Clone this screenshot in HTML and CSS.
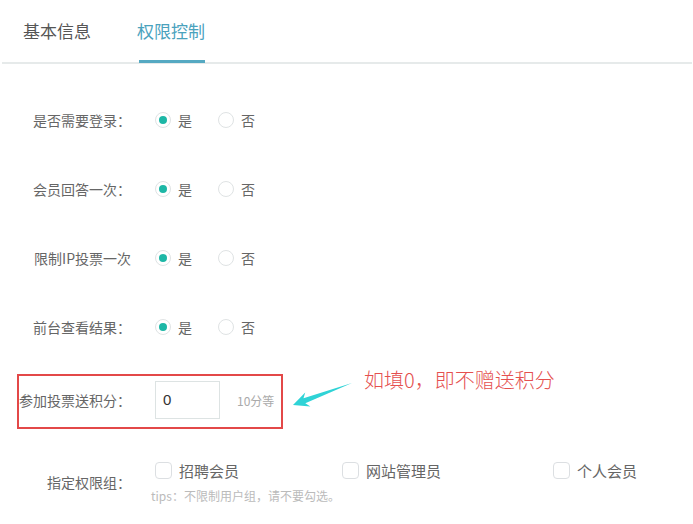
FILE: index.html
```html
<!DOCTYPE html>
<html lang="zh-CN">
<head>
  <meta charset="UTF-8" />
  <title>权限控制</title>
  <link rel="stylesheet" href="styles.css">
</head>
<body>
  <div class="tabs">
    <div class="tab">基本信息</div>
    <div class="tab active">权限控制</div>
  </div>

  <div class="form">
    <div class="row">
      <div class="label">是否需要登录：</div>
      <label class="radio checked"><span class="dot"></span>是</label>
      <label class="radio"><span class="dot"></span>否</label>
    </div>
    <div class="row">
      <div class="label">会员回答一次：</div>
      <label class="radio checked"><span class="dot"></span>是</label>
      <label class="radio"><span class="dot"></span>否</label>
    </div>
    <div class="row">
      <div class="label">限制IP投票一次</div>
      <label class="radio checked"><span class="dot"></span>是</label>
      <label class="radio"><span class="dot"></span>否</label>
    </div>
    <div class="row">
      <div class="label">前台查看结果：</div>
      <label class="radio checked"><span class="dot"></span>是</label>
      <label class="radio"><span class="dot"></span>否</label>
    </div>

    <div class="row row-input">
      <div class="label">参加投票送积分：</div>
      <div class="input">0</div>
      <span class="hint">10分等</span>
    </div>

    <div class="row row-group">
      <div class="label">指定权限组：</div>
      <div class="group">
        <div class="checks">
          <label class="check"><span class="box"></span>招聘会员</label>
          <label class="check"><span class="box"></span>网站管理员</label>
          <label class="check"><span class="box"></span>个人会员</label>
        </div>
        <div class="tips">tips：不限制用户组，请不要勾选。</div>
      </div>
    </div>
  </div>

  <!-- 标注 -->
  <div class="mark-box"></div>
  <svg class="mark-arrow" width="693" height="524" viewBox="0 0 693 524">
    <polygon points="293,405 310.4,406.5 305.3,403.3 352,383 303.5,398.3 305.2,392.5" fill="#2fd3d6"/>
  </svg>
  <div class="mark-text">如填0，即不赠送积分</div>
</body>
</html>
```

FILE: styles.css
```css
* {
  margin: 0;
  padding: 0;
  box-sizing: border-box;
}

body {
  position: relative;
  width: 693px;
  height: 524px;
  font-family: "Noto Sans CJK SC", "Noto Sans", sans-serif;
  font-size: 14px;
  color: #666;
  background-color: #ffffff;
  overflow: hidden;
}

.tabs {
  display: flex;
  height: 64px;
  margin: 0 1px 0 2px;
  padding-left: 21px;
  gap: 46px;
  border-bottom: 2px solid #e6eaea;
}

.tab {
  font-size: 17px;
  line-height: 62px;
  color: #555;
  position: relative;
}

.tab.active {
  color: #4aa2bd;
}

.tab.active:after {
  content: "";
  position: absolute;
  left: 2px;
  right: 0;
  bottom: -1px;
  height: 3px;
  background-color: #55a9c2;
}

.form {
  display: flex;
  flex-direction: column;
  padding-top: 38px;
}

.row {
  display: flex;
  align-items: center;
  height: 36px;
  margin-bottom: 33px;
}

.label {
  width: 131px;
  margin-right: 24px;
  text-align: right;
  white-space: nowrap;
  color: #666;
}

.radio {
  display: flex;
  align-items: center;
  margin-right: 26px;
  color: #666;
}

.radio .dot {
  position: relative;
  width: 16px;
  height: 16px;
  margin-right: 7px;
  border: 1px solid #dfe3e4;
  border-radius: 50%;
  background-color: #fff;
}

.radio.checked .dot:after {
  content: "";
  position: absolute;
  left: 3px;
  top: 3px;
  width: 8px;
  height: 8px;
  border-radius: 50%;
  background-color: #1db7a6;
}

.row-input {
  height: 38px;
  margin-top: 3px;
  margin-bottom: 40px;
}

.input {
  width: 65px;
  height: 38px;
  padding-left: 7px;
  margin-right: 17px;
  border: 1px solid #dde3e3;
  line-height: 36px;
  color: #333;
  font-family: "Liberation Sans", sans-serif;
  font-size: 15px;
}

.hint {
  font-size: 12px;
  color: #aaa;
}

.row-group {
  height: auto;
  align-items: center;
}

.group {
  display: flex;
  flex-direction: column;
}

.checks {
  display: grid;
  grid-template-columns: 187px 211px auto;
  height: 22px;
}

.check {
  display: flex;
  align-items: center;
  font-size: 15px;
  color: #666;
}

.check .box {
  width: 17px;
  height: 17px;
  margin-right: 7px;
  border: 1px solid #dcdfe2;
  border-radius: 4px;
  background-color: #fff;
}

.tips {
  margin-top: 6px;
  margin-left: -4px;
  font-size: 12px;
  line-height: 18px;
  color: #bbb;
}

.mark-box {
  position: absolute;
  left: 17px;
  top: 374px;
  width: 266px;
  height: 55px;
  border: 2px solid #e34848;
}

.mark-arrow {
  position: absolute;
  left: 0;
  top: 0;
}

.mark-text {
  position: absolute;
  left: 364px;
  top: 366px;
  font-size: 20px;
  font-weight: 300;
  line-height: 28px;
  color: #e5504f;
}
```
